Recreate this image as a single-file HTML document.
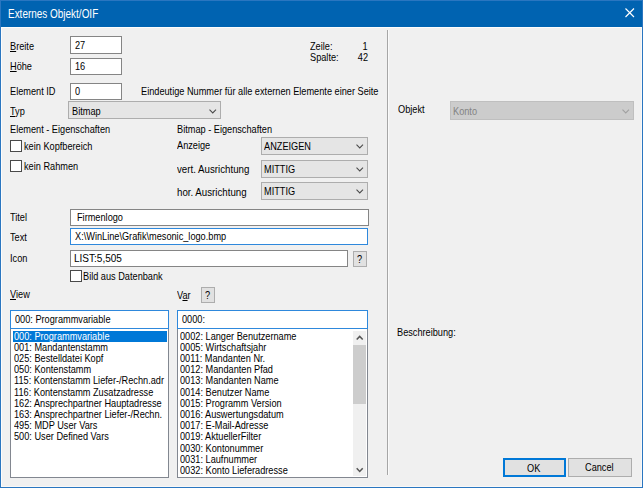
<!DOCTYPE html>
<html><head><meta charset="utf-8">
<style>
*{box-sizing:border-box;margin:0;padding:0}
html,body{width:643px;height:488px;overflow:hidden;background:#f0f0f0}
body{position:relative;font-family:"Liberation Sans",sans-serif;font-size:11px;color:#000}
.a{position:absolute}
.t{position:absolute;white-space:pre;line-height:13px;font-size:10.5px;transform:scaleX(.875);transform-origin:0 0;margin-top:.6px;z-index:3}
.tr{position:absolute;white-space:pre;line-height:13px;font-size:10.5px;transform:scaleX(.875);transform-origin:100% 0;text-align:right;margin-top:.6px;z-index:3}
.ed{position:absolute;background:#fff;border:1px solid #858585}
.edf{position:absolute;background:#fff;border:1px solid #2e88dc;z-index:2}
.cb{position:absolute;background:#e5e5e5;border:1px solid #adadad}
.chk{position:absolute;background:#fff;border:1px solid #4a4a4a;width:12px;height:12px}
.btn{position:absolute;background:#e1e1e1;border:1px solid #adadad}
.chev{position:absolute;width:8px;height:5px}
.li{white-space:pre;line-height:11.2px;font-size:10.5px;transform:scaleX(.875);transform-origin:0 0}
u{text-decoration:underline;text-underline-offset:1px}
</style></head><body>
<!-- frame -->
<div class="a" style="left:0;top:0;width:643px;height:27px;background:#0063b1"></div>
<div class="a" style="left:0;top:0;width:643px;height:488px;border:1px solid #2a76c0"></div>
<div class="a" style="left:1px;top:27px;width:641px;height:460px;border:1px solid #fcfcfc;border-right-color:#f8f8f8;border-bottom-color:#f8f8f8"></div>
<div class="t" style="left:8.4px;top:6.5px;font-size:12px;line-height:14px;color:#fff;transform:scaleX(.83)">Externes Objekt/OIF</div>
<svg class="a" style="left:624.5px;top:8.3px" width="10" height="10" viewBox="0 0 10 10"><path d="M0.5 0.5 L9 9 M9 0.5 L0.5 9" stroke="#fff" stroke-width="1.15" fill="none"/></svg>

<!-- left top -->
<div class="t" style="left:10px;top:39.1px"><u>B</u>reite</div>
<div class="ed" style="left:70px;top:36px;width:52px;height:18px"></div>
<div class="t" style="left:75px;top:38.4px">27</div>
<div class="t" style="left:10px;top:59.7px"><u>H</u>öhe</div>
<div class="ed" style="left:70px;top:58px;width:52px;height:17px"></div>
<div class="t" style="left:75px;top:59.7px">16</div>
<div class="t" style="left:10px;top:84.7px">Element ID</div>
<div class="ed" style="left:70px;top:83px;width:52px;height:17px"></div>
<div class="t" style="left:75px;top:84.9px">0</div>
<div class="t" style="left:141px;top:84.7px">Eindeutige Nummer für alle externen Elemente einer Seite</div>

<div class="t" style="left:10px;top:104.4px"><u>T</u>yp</div>
<div class="cb" style="left:68px;top:101px;width:153px;height:18.4px"></div>
<div class="t" style="left:72px;top:104.6px">Bitmap</div>
<svg class="chev" style="left:209px;top:108.5px" viewBox="0 0 8 5"><path d="M0.5 0.7 L3.75 3.95 L7 0.7" stroke="#4a4a4a" stroke-width="1.05" fill="none"/></svg>

<div class="t" style="left:10px;top:122.7px">Element - Eigenschaften</div>
<div class="t" style="left:176.6px;top:122.7px">Bitmap - Eigenschaften</div>

<div class="chk" style="left:10px;top:140px"></div>
<div class="t" style="left:24.4px;top:139.1px">kein Kopfbereich</div>
<div class="chk" style="left:10px;top:160px"></div>
<div class="t" style="left:24.4px;top:159.1px">kein Rahmen</div>

<div class="t" style="left:176.5px;top:138.7px">Anzeige</div>
<div class="cb" style="left:261px;top:137px;width:107px;height:18px"></div>
<div class="t" style="left:264px;top:139.7px">ANZEIGEN</div>
<svg class="chev" style="left:355.5px;top:144px" viewBox="0 0 8 5"><path d="M0.5 0.7 L3.75 3.95 L7 0.7" stroke="#4a4a4a" stroke-width="1.05" fill="none"/></svg>

<div class="t" style="left:176.5px;top:162.8px;transform:scaleX(.925)">vert. Ausrichtung</div>
<div class="cb" style="left:261px;top:160px;width:107px;height:18px"></div>
<div class="t" style="left:264px;top:162.3px">MITTIG</div>
<svg class="chev" style="left:355.5px;top:166.5px" viewBox="0 0 8 5"><path d="M0.5 0.7 L3.75 3.95 L7 0.7" stroke="#4a4a4a" stroke-width="1.05" fill="none"/></svg>

<div class="t" style="left:176.5px;top:185px;transform:scaleX(.925)">hor. Ausrichtung</div>
<div class="cb" style="left:261px;top:182px;width:107px;height:18px"></div>
<div class="t" style="left:264px;top:184.7px">MITTIG</div>
<svg class="chev" style="left:355.5px;top:189px" viewBox="0 0 8 5"><path d="M0.5 0.7 L3.75 3.95 L7 0.7" stroke="#4a4a4a" stroke-width="1.05" fill="none"/></svg>

<!-- Zeile / Spalte -->
<div class="t" style="left:310px;top:39.1px">Zeile:</div>
<div class="t" style="left:310px;top:50.8px">Spalte:</div>
<div class="tr" style="left:300px;width:67.5px;top:39.1px">1</div>
<div class="tr" style="left:300px;width:68px;top:50.8px">42</div>

<!-- Titel / Text / Icon -->
<div class="t" style="left:10.2px;top:210.7px">Titel</div>
<div class="ed" style="left:70px;top:209px;width:299px;height:17px"></div>
<div class="t" style="left:76.5px;top:210.7px">Firmenlogo</div>
<div class="t" style="left:10.2px;top:230.8px">Text</div>
<div class="edf" style="left:70px;top:228px;width:298px;height:17px"></div>
<div class="t" style="left:74.6px;top:229.5px">X:\WinLine\Grafik\mesonic_logo.bmp</div>
<div class="t" style="left:10.2px;top:251.7px">Icon</div>
<div class="ed" style="left:70px;top:250px;width:278px;height:17px"></div>
<div class="t" style="left:74.4px;top:251.5px;transform:scaleX(.955)">LIST:5,505</div>
<div class="btn" style="left:353px;top:251px;width:14px;height:16px"></div>
<div class="t" style="left:356.5px;top:252.4px">?</div>
<div class="chk" style="left:70px;top:270px"></div>
<div class="t" style="left:83.3px;top:269.8px">Bild aus Datenbank</div>

<!-- View / Var -->
<div class="t" style="left:10.2px;top:287.6px"><u>V</u>iew</div>
<div class="t" style="left:176.5px;top:288.4px">V<u>a</u>r</div>
<div class="btn" style="left:201px;top:287px;width:14px;height:16px"></div>
<div class="t" style="left:204.7px;top:288.6px">?</div>

<div class="edf" style="left:10px;top:310px;width:159px;height:19px"></div>
<div class="t" style="left:15px;top:312px">000: Programmvariable</div>
<div class="a" style="left:10px;top:328px;width:159px;height:150px;background:#fff;border:1px solid #828790;overflow:hidden">
 <div class="a" style="left:1.5px;top:1.5px;width:154.5px;height:11.2px;background:#0078d7"></div>
 <div class="a" style="left:2.6px;top:1.6px;line-height:11.2px;width:200px">
  <div class="li" style=";color:#fff">000: Programmvariable</div>
  <div class="li" style="">001: Mandantenstamm</div>
  <div class="li" style="">025: Bestelldatei Kopf</div>
  <div class="li" style="">050: Kontenstamm</div>
  <div class="li" style="">115: Kontenstamm Liefer-/Rechn.adr</div>
  <div class="li" style="">116: Kontenstamm Zusatzadresse</div>
  <div class="li" style="">162: Ansprechpartner Hauptadresse</div>
  <div class="li" style="">163: Ansprechpartner Liefer-/Rechn.</div>
  <div class="li" style="">495: MDP User Vars</div>
  <div class="li" style="">500: User Defined Vars</div>
 </div>
</div>

<div class="edf" style="left:177px;top:310px;width:191px;height:19px"></div>
<div class="t" style="left:181.6px;top:312.2px">0000:</div>
<div class="a" style="left:177px;top:328px;width:191px;height:150px;background:#fff;border:1px solid #828790;overflow:hidden">
 <div class="a" style="left:2px;top:1.5px;width:200px">
  <div class="li" style="">0002: Langer Benutzername</div>
  <div class="li" style="">0005: Wirtschaftsjahr</div>
  <div class="li" style="">0011: Mandanten Nr.</div>
  <div class="li" style="">0012: Mandanten Pfad</div>
  <div class="li" style="">0013: Mandanten Name</div>
  <div class="li" style="">0014: Benutzer Name</div>
  <div class="li" style="">0015: Programm Version</div>
  <div class="li" style="">0016: Auswertungsdatum</div>
  <div class="li" style="">0017: E-Mail-Adresse</div>
  <div class="li" style="">0019: AktuellerFilter</div>
  <div class="li" style="">0030: Kontonummer</div>
  <div class="li" style="">0031: Laufnummer</div>
  <div class="li" style="">0032: Konto Lieferadresse</div>
 </div>
 <div class="a" style="left:175px;top:2px;width:13px;height:145px;background:#f0f0f0"></div>
 <div class="a" style="left:175px;top:16px;width:13px;height:59px;background:#cdcdcd"></div>
 <svg class="a" style="left:177.5px;top:6.3px" width="8" height="6" viewBox="0 0 8 6"><path d="M0.7 4.6 L3.7 1.4 L6.7 4.6" stroke="#555" stroke-width="1.5" fill="none"/></svg>
 <svg class="a" style="left:177.5px;top:137.8px" width="8" height="6" viewBox="0 0 8 6"><path d="M0.7 1.2 L3.7 4.4 L6.7 1.2" stroke="#555" stroke-width="1.5" fill="none"/></svg>
</div>

<!-- separator -->
<div class="a" style="left:387px;top:29.5px;width:1px;height:445.5px;background:#a6a6a6"></div>
<div class="a" style="left:388px;top:29.5px;width:1px;height:445.5px;background:#fafafa"></div>

<!-- right panel -->
<div class="t" style="left:397.5px;top:102.9px">Objekt</div>
<div class="a" style="left:450px;top:101px;width:183.5px;height:18.5px;background:#cccccc;border:1px solid #bfbfbf"></div>
<div class="t" style="left:452.6px;top:104.4px;color:#838383">Konto</div>
<svg class="chev" style="left:622px;top:108.5px" viewBox="0 0 8 5"><path d="M0.5 0.7 L3.75 3.95 L7 0.7" stroke="#a0a0a0" stroke-width="1.05" fill="none"/></svg>

<div class="t" style="left:397px;top:325.7px">Beschreibung:</div>

<div class="a" style="left:503px;top:458px;width:63px;height:19px;background:#e1e1e1;border:2px solid #0078d7"></div>
<div class="t" style="left:527px;top:461.3px">OK</div>
<div class="btn" style="left:568px;top:458px;width:64px;height:19px"></div>
<div class="t" style="left:585px;top:460.6px">Cancel</div>
</body></html>
